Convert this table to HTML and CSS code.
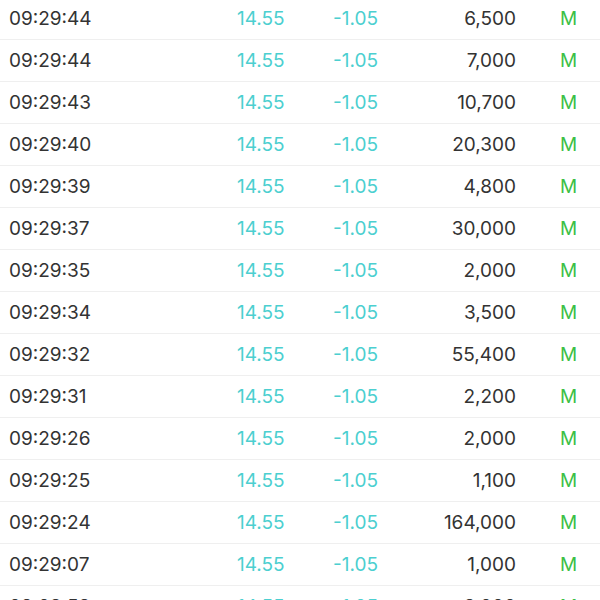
FILE: index.html
```html
<!DOCTYPE html>
<html>
<head>
<meta charset="utf-8">
<link rel="stylesheet" href="styles.css">
</head>
<body>
<div class="list">
  <div class="row"><span class="time">09:29:44</span><span class="price">14.55</span><span class="chg">-1.05</span><span class="vol">6,500</span><span class="flag">M</span></div>
  <div class="row"><span class="time">09:29:44</span><span class="price">14.55</span><span class="chg">-1.05</span><span class="vol">7,000</span><span class="flag">M</span></div>
  <div class="row"><span class="time">09:29:43</span><span class="price">14.55</span><span class="chg">-1.05</span><span class="vol">10,700</span><span class="flag">M</span></div>
  <div class="row"><span class="time">09:29:40</span><span class="price">14.55</span><span class="chg">-1.05</span><span class="vol">20,300</span><span class="flag">M</span></div>
  <div class="row"><span class="time">09:29:39</span><span class="price">14.55</span><span class="chg">-1.05</span><span class="vol">4,800</span><span class="flag">M</span></div>
  <div class="row"><span class="time">09:29:37</span><span class="price">14.55</span><span class="chg">-1.05</span><span class="vol">30,000</span><span class="flag">M</span></div>
  <div class="row"><span class="time">09:29:35</span><span class="price">14.55</span><span class="chg">-1.05</span><span class="vol">2,000</span><span class="flag">M</span></div>
  <div class="row"><span class="time">09:29:34</span><span class="price">14.55</span><span class="chg">-1.05</span><span class="vol">3,500</span><span class="flag">M</span></div>
  <div class="row"><span class="time">09:29:32</span><span class="price">14.55</span><span class="chg">-1.05</span><span class="vol">55,400</span><span class="flag">M</span></div>
  <div class="row"><span class="time">09:29:31</span><span class="price">14.55</span><span class="chg">-1.05</span><span class="vol">2,200</span><span class="flag">M</span></div>
  <div class="row"><span class="time">09:29:26</span><span class="price">14.55</span><span class="chg">-1.05</span><span class="vol">2,000</span><span class="flag">M</span></div>
  <div class="row"><span class="time">09:29:25</span><span class="price">14.55</span><span class="chg">-1.05</span><span class="vol">1,100</span><span class="flag">M</span></div>
  <div class="row"><span class="time">09:29:24</span><span class="price">14.55</span><span class="chg">-1.05</span><span class="vol">164,000</span><span class="flag">M</span></div>
  <div class="row"><span class="time">09:29:07</span><span class="price">14.55</span><span class="chg">-1.05</span><span class="vol">1,000</span><span class="flag">M</span></div>
  <div class="row"><span class="time">09:28:58</span><span class="price">14.55</span><span class="chg">-1.05</span><span class="vol">3,000</span><span class="flag">M</span></div>
</div>
</body>
</html>
```
FILE: styles.css
```css
html, body {
  margin: 0;
  padding: 0;
  background: #ffffff;
  overflow: hidden;
}
.list {
  margin-top: -2px;
  font-family: Inter, "Liberation Sans", sans-serif;
  font-size: 19px;
}
.row {
  display: grid;
  grid-template-columns: 228px 96px 100px 83px 44px 1fr;
  align-items: center;
  height: 41px;
  padding-left: 9px;
  border-bottom: 1px solid #efefef;
  white-space: nowrap;
}
.time { color: #333333; }
.price { color: #4ccfd0; }
.chg { color: #4ccfd0; }
.vol { color: #333333; text-align: right; }
.flag { color: #3cbf46; grid-column: 6; }
```
